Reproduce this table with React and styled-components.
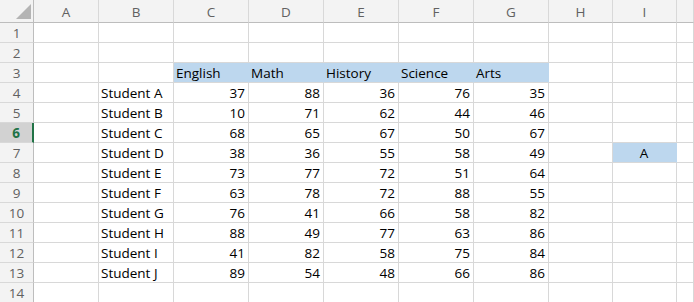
import React from "react"
import styled, { createGlobalStyle } from "styled-components"

const GlobalStyle = createGlobalStyle`
  body {
    margin: 0;
    background: #ffffff;
    font-family: "Open Sans", "Noto Sans", sans-serif;
    overflow: hidden;
  }
`

// last column (J) runs off the right edge, its letter is not visible
const colWidths = [34, 65, 75, 75, 75, 75, 75, 75, 64, 64, 17]
const colNames = ["A", "B", "C", "D", "E", "F", "G", "H", "I", ""]

const subjects = ["English", "Math", "History", "Science", "Arts"]
const students = [
  ["Student A", 37, 88, 36, 76, 35],
  ["Student B", 10, 71, 62, 44, 46],
  ["Student C", 68, 65, 67, 50, 67],
  ["Student D", 38, 36, 55, 58, 49],
  ["Student E", 73, 77, 72, 51, 64],
  ["Student F", 63, 78, 72, 88, 55],
  ["Student G", 76, 41, 66, 58, 82],
  ["Student H", 88, 49, 77, 63, 86],
  ["Student I", 41, 82, 58, 75, 84],
  ["Student J", 89, 54, 48, 66, 86],
]

const Sheet = styled.div`
  display: grid;
  grid-template-columns: ${colWidths.map(w => `${w}px`).join(" ")};
  grid-template-rows: 23px repeat(14, 20px);
  width: 694px;
  height: 302px;
  overflow: hidden;
`

const Corner = styled.div`
  position: relative;
  background: #f3f3f3;
  border-right: 1px solid #bdbdbd;
  border-bottom: 1px solid #bdbdbd;

  &::after {
    content: "";
    position: absolute;
    right: 2px;
    bottom: 3px;
    width: 0;
    height: 0;
    border-left: 15px solid transparent;
    border-bottom: 15px solid #b4b4b4;
  }
`

const ColHeader = styled.div`
  display: flex;
  align-items: center;
  justify-content: center;
  padding-top: 1px;
  box-sizing: border-box;
  background: #f3f3f3;
  border-right: 1px solid #d8d8d8;
  border-bottom: 1px solid #bdbdbd;
  color: #616161;
  font-size: 13.5px;
`

const RowHeader = styled.div`
  display: flex;
  align-items: center;
  justify-content: center;
  box-sizing: border-box;
  background: ${({ $active }) => ($active ? "#d2d2d2" : "#f3f3f3")};
  border-right: ${({ $active }) =>
    $active ? "2px solid #217346" : "1px solid #bdbdbd"};
  border-bottom: 1px solid #d8d8d8;
  color: ${({ $active }) => ($active ? "#217346" : "#616161")};
  font-weight: ${({ $active }) => ($active ? 700 : 400)};
  font-size: 13.5px;
`

const Cell = styled.div`
  display: flex;
  align-items: center;
  justify-content: ${({ $align }) =>
    $align === "right" ? "flex-end" : $align === "center" ? "center" : "flex-start"};
  padding: 1px 3px 0 2px;
  box-sizing: border-box;
  background: ${({ $fill }) => ($fill ? "#bdd7ee" : "#ffffff")};
  border-right: 1px solid ${({ $fill }) => ($fill ? "#bdd7ee" : "#d8d8d8")};
  border-bottom: 1px solid #d8d8d8;
  color: #000;
  font-size: 13.5px;
  white-space: nowrap;
  overflow: hidden;
`

function cellFor(row, col) {
  // row: 1-based sheet row, col: 0-based (A = 0)
  if (row === 3 && col >= 2 && col <= 6) {
    return { text: subjects[col - 2], fill: true }
  }
  if (row >= 4 && row <= 13) {
    const s = students[row - 4]
    if (col === 1) return { text: s[0] }
    if (col >= 2 && col <= 6) return { text: s[col - 1], align: "right" }
  }
  if (row === 7 && col === 8) return { text: "A", fill: true, align: "center" }
  return { text: "" }
}

export default function App() {
  const rows = Array.from({ length: 14 }, (_, i) => i + 1)
  return (
    <>
      <GlobalStyle />
      <Sheet>
        <Corner />
        {colNames.map((c, ci) => (
          <ColHeader key={ci}>{c}</ColHeader>
        ))}
        {rows.map(r => (
          <React.Fragment key={r}>
            <RowHeader $active={r === 6}>{r}</RowHeader>
            {colNames.map((c, ci) => {
              const cell = cellFor(r, ci)
              return (
                <Cell key={ci} $fill={cell.fill} $align={cell.align}>
                  {cell.text}
                </Cell>
              )
            })}
          </React.Fragment>
        ))}
      </Sheet>
    </>
  )
}
